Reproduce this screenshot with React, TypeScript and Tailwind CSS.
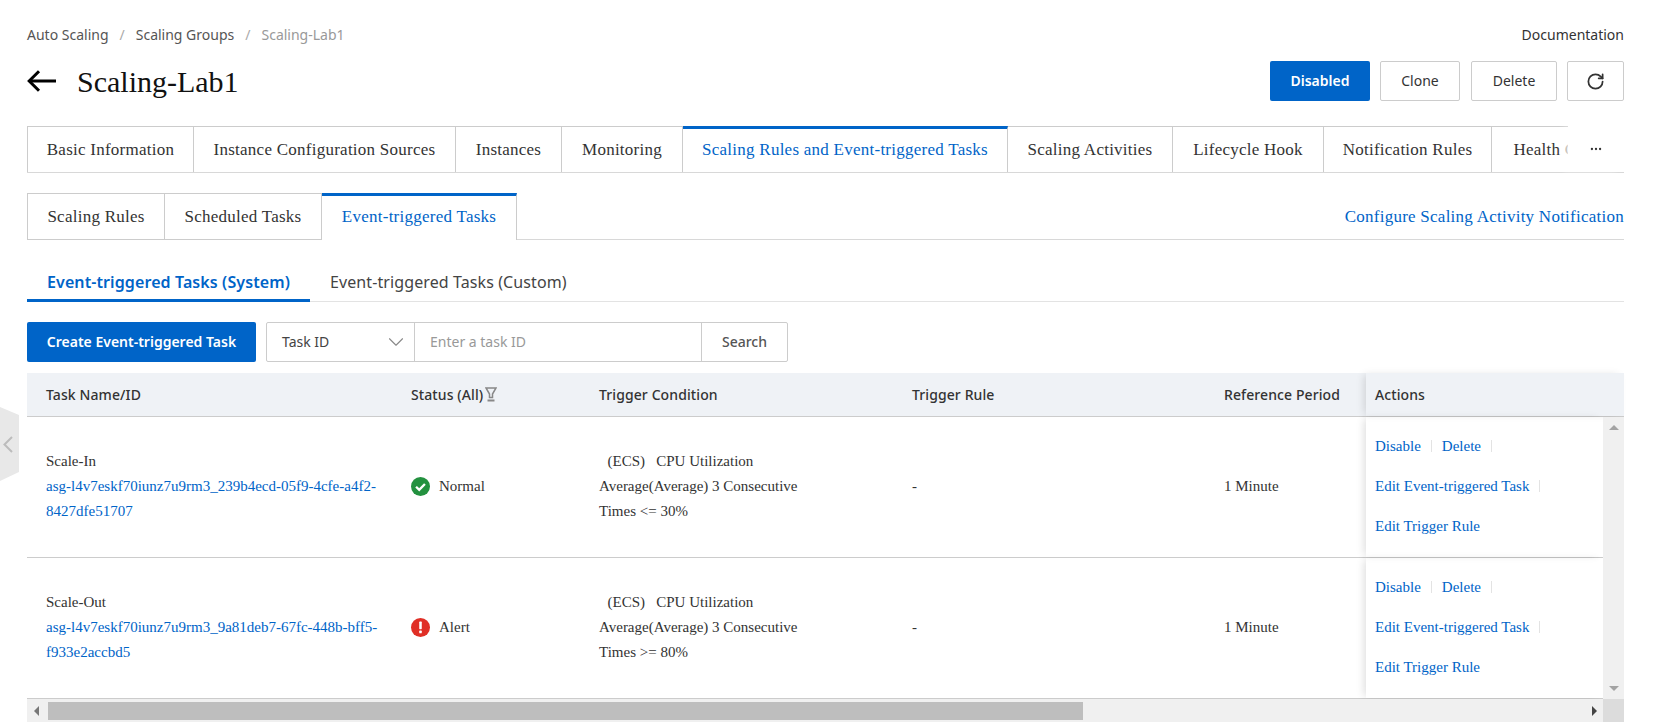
import { RotateCw, ChevronDown, Ellipsis } from "lucide-react";

const serif = "font-['Liberation_Serif',serif]";
const sans = "font-['Noto_Sans',sans-serif]";

const mainTabs = [
  { label: "Basic Information", w: "w-[167px]" },
  { label: "Instance Configuration Sources", w: "w-[262px]" },
  { label: "Instances", w: "w-[106px]" },
  { label: "Monitoring", w: "w-[121px]" },
  { label: "Scaling Rules and Event-triggered Tasks", w: "w-[325px]", active: true },
  { label: "Scaling Activities", w: "w-[165px]" },
  { label: "Lifecycle Hook", w: "w-[151px]" },
  { label: "Notification Rules", w: "w-[168px]" },
  { label: "Health Check", w: "w-[140px]" },
];

const subTabs = [
  { label: "Scaling Rules", w: "w-[138px]" },
  { label: "Scheduled Tasks", w: "w-[157px]" },
  { label: "Event-triggered Tasks", w: "w-[195px]", active: true },
];

const rows = [
  {
    name: "Scale-In",
    id: "asg-l4v7eskf70iunz7u9rm3_239b4ecd-05f9-4cfe-a4f2-8427dfe51707",
    status: "Normal",
    cond: "Times <= 30%",
  },
  {
    name: "Scale-Out",
    id: "asg-l4v7eskf70iunz7u9rm3_9a81deb7-67fc-448b-bff5-f933e2accbd5",
    status: "Alert",
    cond: "Times >= 80%",
  },
];

function StatusIcon({ status }: { status: string }) {
  if (status === "Normal") {
    return (
      <svg width="19" height="19" viewBox="0 0 18 18" className="shrink-0">
        <circle cx="9" cy="9" r="9" fill="#23913f" />
        <path d="M4.8 9.2l3 3 5.4-5.6" fill="none" stroke="#fff" strokeWidth="2.2" />
      </svg>
    );
  }
  return (
    <svg width="19" height="19" viewBox="0 0 18 18" className="shrink-0">
      <circle cx="9" cy="9" r="9" fill="#e02f26" />
      <rect x="7.8" y="3.4" width="2.4" height="7.2" rx="0.6" fill="#fff" />
      <rect x="7.8" y="11.9" width="2.4" height="2.6" rx="0.6" fill="#fff" />
    </svg>
  );
}

function FilterIcon() {
  return (
    <svg width="12" height="15" viewBox="0 0 12 15" className="ml-[2px] shrink-0" fill="none" stroke="#888">
      <path d="M1 1h10L7.5 7v3.5h-3V7z" strokeWidth="1.5" />
      <path d="M2.5 13.5h7" strokeWidth="2" />
    </svg>
  );
}

export default function App() {
  return (
    <div className={`relative w-[1653px] h-[722px] overflow-hidden bg-white pl-[27px] pr-[29px] text-[#333] ${serif}`}>
      {/* Sidebar collapse handle */}
      <div className="absolute left-0 top-[407px] w-[19px] h-[74px] bg-[#e8e8e8] [clip-path:polygon(0_0,100%_8px,100%_65px,0_100%)] flex items-center pl-[3px]">
        <svg width="10" height="17" viewBox="0 0 10 17" fill="none" stroke="#bcbcbc" strokeWidth="2">
          <path d="M9 1L1.5 8.5 9 16" />
        </svg>
      </div>

      <div className={`flex justify-between items-center h-[70px] text-sm ${sans}`}>
        <div className="flex gap-[11px] text-[#555]">
          <span>Auto Scaling</span>
          <span className="text-[#aaa]">/</span>
          <span>Scaling Groups</span>
          <span className="text-[#aaa]">/</span>
          <span className="text-[#999]">Scaling-Lab1</span>
        </div>
        <span>Documentation</span>
      </div>

      <div className="flex justify-between items-center h-[40px] -mt-[9px]">
        <div className="flex items-center">
          <svg width="29" height="22" viewBox="0 0 29 22" fill="none" stroke="#000" strokeWidth="3">
            <path d="M29 11H3" />
            <path d="M12 1.2L2.2 11 12 20.8" />
          </svg>
          <h1 className="ml-[21px] text-[30px] font-normal text-[#111]">Scaling-Lab1</h1>
        </div>
        <div className={`flex text-sm ${sans}`}>
          <button className="w-[100px] h-[40px] rounded-[2px] bg-[#0064c8] text-white font-semibold">Disabled</button>
          <button className="ml-[10px] w-[80px] h-[40px] rounded-[2px] border border-[#ccc]">Clone</button>
          <button className="ml-[11px] w-[86px] h-[40px] rounded-[2px] border border-[#ccc]">Delete</button>
          <button className="ml-[10px] w-[57px] h-[40px] rounded-[2px] border border-[#ccc] flex items-center justify-center">
            <RotateCw size={19} strokeWidth={2.2} />
          </button>
        </div>
      </div>

      {/* Main tabs */}
      <div className="relative flex h-[47px] mt-[25px] border-b border-[#d8d8d8]">
        <div className="flex w-[1541px] overflow-hidden">
          {mainTabs.map((t) => (
            <div
              key={t.label}
              className={`${t.w} shrink-0 h-[47px] flex items-center justify-center text-[17px] tracking-[0.25px] border-r first:border-l ${
                t.active
                  ? "border-t-[3px] border-t-[#0064c8] border-r-[#ccc] text-[#0064c8] bg-white pb-[2px]"
                  : "border-t border-b border-[#ccc] text-[#333]"
              }`}
            >
              {t.label}
            </div>
          ))}
        </div>
        <div className="flex-1 h-[46px] bg-white flex items-center justify-center shadow-[-6px_0_6px_-2px_rgba(255,255,255,0.9)]">
          <Ellipsis size={14} />
        </div>
      </div>

      {/* Sub tabs */}
      <div className="flex justify-between h-[47px] mt-[20px] border-b border-[#d8d8d8]">
        <div className="flex">
          {subTabs.map((t) => (
            <div
              key={t.label}
              className={`${t.w} h-[47px] flex items-center justify-center text-[17px] tracking-[0.25px] border-r first:border-l ${
                t.active
                  ? "border-t-[3px] border-t-[#0064c8] border-r-[#ccc] text-[#0064c8] bg-white pb-[2px]"
                  : "border-t border-b border-[#ccc]"
              }`}
            >
              {t.label}
            </div>
          ))}
        </div>
        <a className="self-center pt-[2px] text-[17px] tracking-[0.25px] text-[#0064c8]">Configure Scaling Activity Notification</a>
      </div>

      {/* Pill tabs */}
      <div className={`flex h-[40px] mt-[22px] border-b border-[#e3e3e3] text-base tracking-[0.1px] ${sans}`}>
        <div className="w-[283px] h-[40px] border-b-[3px] border-[#0064c8] pl-[20px] font-semibold text-[#0064c8] leading-[40px]">
          Event-triggered Tasks (System)
        </div>
        <div className="pl-[20px] leading-[40px] text-[#444]">Event-triggered Tasks (Custom)</div>
      </div>

      {/* Toolbar */}
      <div className={`flex h-[40px] mt-[20px] text-sm ${sans}`}>
        <button className="w-[229px] h-[40px] rounded-[2px] bg-[#0064c8] text-white font-semibold">Create Event-triggered Task</button>
        <div className="ml-[10px] flex h-[40px] rounded-[2px] border border-[#ccc]">
          <div className="w-[148px] flex items-center justify-between pl-[15px] pr-[5px] border-r border-[#ccc] text-[#444]">
            Task ID
            <ChevronDown size={26} strokeWidth={1} className="text-[#888]" />
          </div>
          <div className="w-[287px] flex items-center pl-[15px] border-r border-[#ccc] text-[#999]">Enter a task ID</div>
          <div className="w-[85px] flex items-center justify-center text-[#555] font-medium">Search</div>
        </div>
      </div>

      {/* Table */}
      <div className="relative mt-[11px]">
        <div className={`flex h-[44px] items-center bg-[#eff2f6] border-b border-[#ccc] text-sm font-medium tracking-[0.1px] ${sans}`}>
          <div className="w-[365px] pl-[19px]">Task Name/ID</div>
          <div className="w-[188px] pl-[19px] flex items-center">
            Status (All)
            <FilterIcon />
          </div>
          <div className="w-[313px] pl-[19px]">Trigger Condition</div>
          <div className="w-[312px] pl-[19px]">Trigger Rule</div>
          <div className="w-[161px] pl-[19px] whitespace-nowrap">Reference Period</div>
          <div className="flex-1 h-full flex items-center pl-[9px] shadow-[-4px_0_8px_-2px_rgba(0,0,0,0.13)]">Actions</div>
        </div>

        <div className="flex">
          <div className="w-[1576px]">
            {rows.map((r) => (
              <div key={r.name} className="flex h-[141px] items-center border-b border-[#ccc] text-[15px] leading-[25px]">
                <div className="w-[365px] pl-[19px] pb-[2px]">
                  <div>{r.name}</div>
                  <div className="text-[#0064c8] w-[335px]">{r.id}</div>
                </div>
                <div className="w-[188px] pl-[19px] pb-[2px] flex items-center gap-[9px]">
                  <StatusIcon status={r.status} />
                  {r.status}
                </div>
                <div className="w-[313px] pl-[19px] pr-[70px] pb-[2px]">
                  <div className="whitespace-pre ml-px">{"  (ECS)   CPU Utilization"}</div>
                  <div>Average(Average) 3 Consecutive</div>
                  <div>{r.cond}</div>
                </div>
                <div className="w-[312px] pl-[19px] pb-[2px]">-</div>
                <div className="w-[161px] pl-[19px] pb-[2px]">1 Minute</div>
                <div className="flex-1 h-full pl-[9px] pb-[2px] flex flex-col justify-center gap-[15px] text-[#0064c8] shadow-[-4px_0_8px_-2px_rgba(0,0,0,0.13)]">
                  <div className="flex items-center">
                    <span>Disable</span>
                    <span className="mx-[10px] w-px h-[12px] bg-[#e3e3e3]" />
                    <span>Delete</span>
                    <span className="ml-[10px] w-px h-[12px] bg-[#e3e3e3]" />
                  </div>
                  <div className="flex items-center">
                    <span>Edit Event-triggered Task</span>
                    <span className="ml-[10px] w-px h-[12px] bg-[#e3e3e3]" />
                  </div>
                  <div>Edit Trigger Rule</div>
                </div>
              </div>
            ))}
          </div>
          {/* Vertical scrollbar */}
          <div className="flex-1 bg-[#f0f0f0] flex flex-col items-center justify-between py-[8px]">
            <div className="w-0 h-0 border-x-[5px] border-x-transparent border-b-[5px] border-b-[#a3a3a3]" />
            <div className="w-0 h-0 border-x-[5px] border-x-transparent border-t-[5px] border-t-[#a3a3a3]" />
          </div>
        </div>

        {/* Horizontal scrollbar */}
        <div className="flex h-[23px]">
          <div className="flex-1 bg-[#f0f0f0] flex items-center pl-[7px] pr-[6px]">
            <div className="w-0 h-0 border-y-[5px] border-y-transparent border-r-[5px] border-r-[#777]" />
            <div className="ml-[9px] w-[1035px] h-[18px] bg-[#bebebe]" />
            <div className="ml-auto w-0 h-0 border-y-[5px] border-y-transparent border-l-[5px] border-l-[#444]" />
          </div>
          <div className="w-[21px] bg-[#dcdcdc]" />
        </div>
      </div>
    </div>
  );
}
